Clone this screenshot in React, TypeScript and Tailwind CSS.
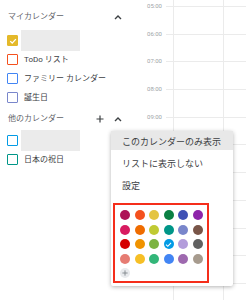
import React from "react";

const font = { fontFamily: '"Roboto", "Noto Sans CJK JP", sans-serif' };

const palette = [
    ["#ad1457", "#f4511e", "#e4c441", "#0b8043", "#3f51b5", "#8e24aa"],
    ["#d81b60", "#ef6c00", "#c0ca33", "#009688", "#7986cb", "#795548"],
    ["#d50000", "#f09300", "#7cb342", "#039be5", "#b39ddb", "#616161"],
    ["#e67c73", "#f6bf26", "#33b679", "#4285f4", "#9e69af", "#a79b8e"],
];

const hours = ["05:00", "06:00", "07:00", "08:00", "09:00", "10:00", "11:00", "12:00", "13:00", "14:00", "15:00"];

const ChevronUp = () => (
    <svg width="8" height="6" viewBox="0 0 8 6">
        <polyline points="1,5 4,2 7,5" fill="none" stroke="#3c4043" strokeWidth="1.4" />
    </svg>
);

const Plus = ({ color = "#3c4043", size = 8 }: { color?: string; size?: number }) => (
    <svg width={size} height={size} viewBox="0 0 8 8">
        <path d="M4 0.5v7M0.5 4h7" stroke={color} strokeWidth="1.2" />
    </svg>
);

const Check = ({ size = 8 }: { size?: number }) => (
    <svg width={size} height={size} viewBox="0 0 10 10">
        <polyline points="1.5,5.2 4,7.6 8.6,2.6" fill="none" stroke="#fff" strokeWidth="1.6" />
    </svg>
);

const Box = ({ color, checked }: { color: string; checked?: boolean }) => (
    <div
        className="w-[11px] h-[11px] rounded-[1px] border-[1.5px] flex items-center justify-center shrink-0"
        style={{ borderColor: color, background: checked ? color : "transparent" }}
    >
        {checked && <Check />}
    </div>
);

const Row = ({ color, checked, label, blank }: { color: string; checked?: boolean; label?: string; blank?: boolean }) => (
    <div className="h-[19px] flex items-center pl-[7px]">
        <Box color={color} checked={checked} />
        {blank ? (
            <div className="ml-[3px] w-[59px] h-[21px] bg-[#ebebeb]" />
        ) : (
            <span className="ml-[6px] text-[8px] leading-none text-[#3c4043] whitespace-nowrap">{label}</span>
        )}
    </div>
);

export default function App() {
    return (
        <div className="relative w-[246px] h-[300px] bg-white overflow-hidden flex" style={font}>
            {/* sidebar */}
            <div className="w-[130px] shrink-0 flex flex-col pt-[11px]">
                <div className="h-[12px] flex items-center justify-between pl-[8px] pr-[8px]">
                    <span className="text-[8px] leading-none text-[#5f6368]">マイカレンダー</span>
                    <ChevronUp />
                </div>
                <div className="h-[8px]" />
                <Row color="#e4b92a" checked blank />
                <Row color="#f4511e" label="ToDo リスト" />
                <Row color="#4285f4" label="ファミリー カレンダー" />
                <Row color="#7986cb" label="誕生日" />
                <div className="h-[6px]" />
                <div className="h-[12px] flex items-center pl-[8px] pr-[8px]">
                    <span className="text-[8px] leading-none text-[#5f6368]">他のカレンダー</span>
                    <div className="ml-auto mr-[10px] flex"><Plus /></div>
                    <ChevronUp />
                </div>
                <div className="h-[6px]" />
                <Row color="#039be5" blank />
                <Row color="#009688" label="日本の祝日" />
            </div>

            {/* time labels */}
            <div className="w-[36px] shrink-0 flex flex-col pt-[6px] pr-[4px]">
                {hours.map((h) => (
                    <div key={h} className="h-[27.7px] shrink-0 flex justify-end">
                        <span className="text-[6px] leading-none text-[#a0a4a8] -mt-[3px]">{h}</span>
                    </div>
                ))}
            </div>

            {/* grid */}
            <div className="flex-1 flex flex-col">
                <div className="h-[6px] shrink-0 flex">
                    <div className="w-[7px]" />
                    <div className="w-[50px] border-l border-[#ebebeb]" />
                    <div className="flex-1 border-l border-[#ebebeb]" />
                </div>
                {hours.map((h) => (
                    <div key={h} className="h-[27.7px] shrink-0 flex border-t border-[#ebebeb]">
                        <div className="w-[7px]" />
                        <div className="w-[50px] border-l border-[#ebebeb]" />
                        <div className="flex-1 border-l border-[#ebebeb]" />
                    </div>
                ))}
            </div>

            {/* popup menu */}
            <div className="absolute left-[111px] top-[131px] w-[122px] h-[155px] bg-white rounded-[2px] shadow-[0_1px_4px_rgba(0,0,0,0.3)] flex flex-col">
                <div className="h-[19px] bg-[#e8e8e8] flex items-center pl-[11px] pt-[3px]">
                    <span className="text-[9px] leading-none text-[#3c4043] whitespace-nowrap">このカレンダーのみ表示</span>
                </div>
                <div className="h-[23px] flex items-center pl-[11px] pt-[6px]">
                    <span className="text-[9px] leading-none text-[#3c4043]">リストに表示しない</span>
                </div>
                <div className="h-[23px] flex items-center pl-[11px] pt-[3px]">
                    <span className="text-[9px] leading-none text-[#3c4043]">設定</span>
                </div>
                <div className="mt-[7px] ml-[2px] w-[96px] h-[80px] border-2 border-[#f52e1b] flex flex-col pl-[5px] pt-[5px] gap-[4.5px]">
                    {palette.map((row, i) => (
                        <div key={i} className="flex gap-[4.5px]">
                            {row.map((c) => (
                                <div
                                    key={c}
                                    className="w-[10px] h-[10px] rounded-full flex items-center justify-center"
                                    style={{ background: c }}
                                >
                                    {c === "#039be5" && <Check size={7} />}
                                </div>
                            ))}
                        </div>
                    ))}
                    <div className="w-[10px] h-[10px] rounded-full bg-[#e8eaed] flex items-center justify-center">
                        <Plus color="#80868b" size={6} />
                    </div>
                </div>
            </div>
        </div>
    );
}
